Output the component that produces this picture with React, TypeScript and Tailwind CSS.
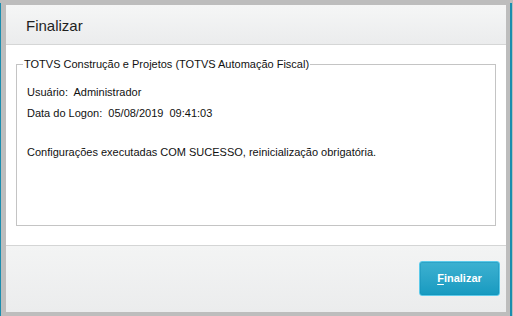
import React from "react";

export default function App() {
  const font = { fontFamily: '"Liberation Sans", Arial, sans-serif' };
  return (
    <div
      className="w-[513px] h-[316px] bg-[#bdbdbd] flex flex-col pt-[3px] pr-[1px] overflow-hidden"
      style={font}
    >
      <div className="flex-1 flex flex-col border-l border-r-2 border-[#1b8dae] pt-[2px] pl-[5px] pr-[4px] pb-[4px]">
        <div className="w-[500px] h-[307px] flex flex-col">
          {/* Header */}
          <div className="h-[40px] border-b border-[#d5d6d6] bg-linear-to-b from-[#f5f6f6] to-[#ebeced] pl-[20px] pt-[12px]">
            <div className="text-[15px] leading-[18px] text-[#1f1f1f]">Finalizar</div>
          </div>
          {/* Body */}
          <div className="h-[200px] bg-white px-[10px] pt-[13px]">
            <fieldset className="h-[168px] border border-[#c4c4c4] pl-[10px] pr-[10px]">
              <legend className="-ml-[4px] px-[1px] text-[11px] leading-[13px] text-[#111]">
                TOTVS Construção e Projetos (TOTVS Automação Fiscal)
              </legend>
              <div className="pt-[15px] text-[11px] leading-[13px] text-[#111] whitespace-pre">
                <div>Usuário:  Administrador</div>
                <div className="mt-[8px]">Data do Logon:  05/08/2019  09:41:03</div>
                <div className="mt-[26px]">
                  Configurações executadas COM SUCESSO, reinicialização obrigatória.
                </div>
              </div>
            </fieldset>
          </div>
          {/* Footer */}
          <div className="h-[67px] border-t border-[#d4d5d5] bg-linear-to-b from-[#f3f4f4] to-[#ebeced] flex justify-end items-start pt-[15px] pr-[6px]">
            <button className="w-[81px] h-[35px] rounded-[3px] border border-[#5ccaea] bg-linear-to-b from-[#3cb1d1] to-[#159ac0] text-white text-[11px] font-bold flex items-center justify-center shadow-[inset_0_0_0_1px_rgba(20,140,180,0.35)]">
              <span>
                <span className="underline underline-offset-2">F</span>inalizar
              </span>
            </button>
          </div>
        </div>
      </div>
    </div>
  );
}
